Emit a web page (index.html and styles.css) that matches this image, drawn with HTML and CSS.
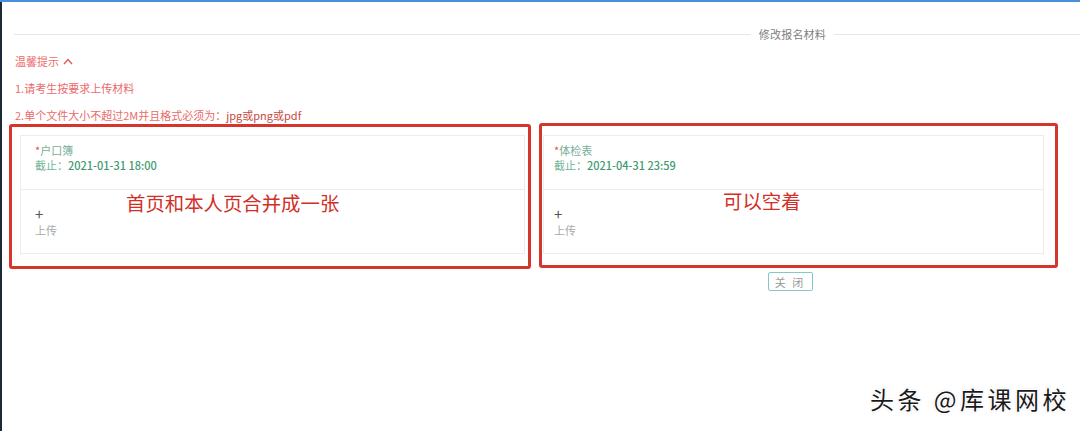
FILE: index.html
```html
<!DOCTYPE html>
<html lang="zh-CN">
<head>
    <meta charset="UTF-8">
    <meta name="viewport" content="width=device-width, initial-scale=1.0">
    <title>修改报名材料</title>
    <link rel="stylesheet" href="styles.css">
</head>
<body>
    <div class="page">
        <div class="title-row">
            <span class="title-line"></span>
            <span class="title">修改报名材料</span>
            <span class="title-line title-line-right"></span>
        </div>
        <div class="tips">
            <div class="tips-head">温馨提示
                <svg class="chevron" width="10" height="7" viewBox="0 0 10 7"><polyline points="1,6 5,1.5 9,6" fill="none" stroke="#e05a5a" stroke-width="1.4"/></svg>
            </div>
            <p>1.请考生按要求上传材料</p>
            <p>2.单个文件大小不超过2M并且格式必须为：<span class="fmt">jpg或png或pdf</span></p>
        </div>
        <div class="materials">
            <div class="mark mark-left">
                <div class="card">
                    <div class="card-head">
                        <div class="card-name"><span class="star">*</span>户口簿</div>
                        <div class="card-date"><span class="date-label">截止：</span>2021-01-31 18:00</div>
                    </div>
                    <div class="card-body">
                        <div class="plus">+</div>
                        <div class="upload">上传</div>
                    </div>
                    <div class="note note-left">首页和本人页合并成一张</div>
                </div>
            </div>
            <div class="mark mark-right">
                <div class="card">
                    <div class="card-head">
                        <div class="card-name"><span class="star">*</span>体检表</div>
                        <div class="card-date"><span class="date-label">截止：</span>2021-04-31 23:59</div>
                    </div>
                    <div class="card-body">
                        <div class="plus">+</div>
                        <div class="upload">上传</div>
                    </div>
                    <div class="note note-right">可以空着</div>
                </div>
            </div>
        </div>
        <div class="footer">
            <button class="close-btn">关 闭</button>
        </div>
    </div>
    <div class="watermark">头条 @库课网校</div>
</body>
</html>
```

FILE: styles.css
```css
html {
    height: 100%;
    background: #fff;
    box-shadow: inset 0 2px #4690dc, inset 2px 0 #1c2836;
}
body {
    margin: 0;
    font-family: "Noto Sans CJK SC", "Microsoft YaHei", sans-serif;
    font-size: 11px;
    color: #666;
}
.page {
    padding-top: 24px;
}
.title-row {
    display: flex;
    align-items: center;
    height: 20px;
    padding-left: 14px;
}
.title-line {
    flex: 1;
    height: 1px;
    background: #e6e6e6;
}
.title-line-right {
    flex: none;
    width: 246px;
}
.title {
    padding: 0 8px;
    color: #808080;
    letter-spacing: 0.2px;
}
.tips {
    padding-left: 15px;
    color: #ec6a6a;
}
.tips-head {
    display: flex;
    align-items: center;
    gap: 4px;
    margin-top: 9px;
    line-height: 16px;
}
.tips p {
    margin: 11px 0 0;
    line-height: 16px;
}
.fmt {
    color: #c8483e;
}
.materials {
    display: flex;
    align-items: flex-start;
    gap: 8px;
    padding-left: 9px;
}
.mark {
    border: 3px solid #d4352c;
    border-radius: 3px;
}
.mark-left {
    width: 522px;
    box-sizing: border-box;
    margin-top: 1px;
    padding: 8px 3px 12px 8px;
}
.mark-right {
    width: 519px;
    box-sizing: border-box;
    padding: 9px 11px 11px 1px;
}
.card {
    position: relative;
    border: 1px solid #ececec;
}
.card-head {
    padding: 7px 14px 16px;
    border-bottom: 1px solid #ececec;
    line-height: 15px;
}
.mark-right .card-head,
.mark-right .card-body {
    padding-left: 10px;
}
.card-name {
    color: #76ae96;
}
.star {
    color: #d9534f;
}
.card-date {
    color: #3f9a70;
    font-weight: 500;
}
.date-label {
    color: #74b496;
    font-weight: normal;
}
.card-body {
    padding: 16px 14px 15px;
    line-height: 16px;
}
.plus {
    color: #555;
    font-size: 15px;
}
.upload {
    color: #aaa;
}
.note {
    position: absolute;
    top: 57px;
    color: #d22f27;
    font-size: 19.4px;
    line-height: 20px;
}
.note-left {
    left: 105px;
}
.note-right {
    left: 179px;
    top: 55px;
}
.footer {
    display: flex;
    justify-content: center;
    padding-left: 500px;
    margin-top: 3px;
}
.close-btn {
    width: 45px;
    height: 19px;
    padding: 0;
    background: #fff;
    border: 1px solid #86c7cc;
    border-radius: 2px;
    font-family: inherit;
    font-size: 11px;
    color: #9a9a9a;
    letter-spacing: 2px;
}
.watermark {
    position: absolute;
    right: 10px;
    bottom: 15px;
    font-size: 24px;
    letter-spacing: 3.5px;
    color: #1a1a1a;
    text-shadow: 1px 1px 0 #fff, -1px -1px 0 #fff, 1px -1px 0 #fff, -1px 1px 0 #fff, 0 0 3px rgba(0, 0, 0, 0.25);
}
```
